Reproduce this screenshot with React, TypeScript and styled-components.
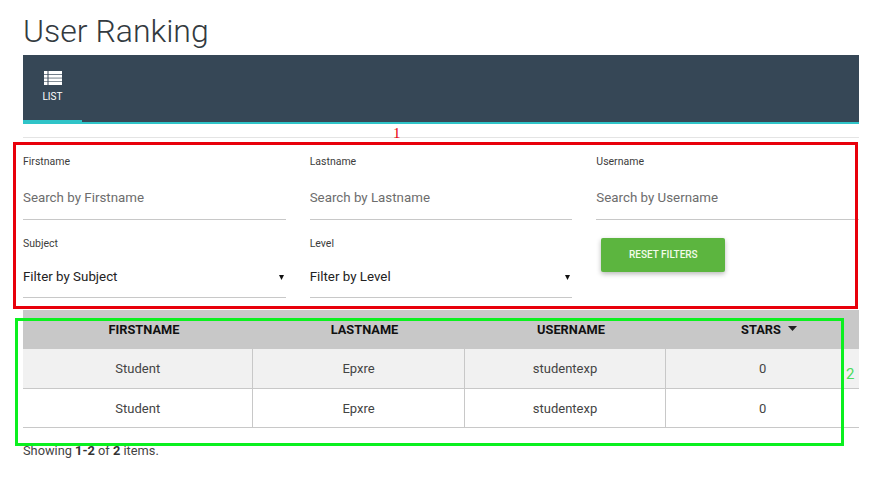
import React from "react";
import styled, { createGlobalStyle } from "styled-components";

const Global = createGlobalStyle`
  html, body { margin: 0; padding: 0; background: #fff; }
  body { font-family: Roboto, "Liberation Sans", sans-serif; color: #333; }
  * { box-sizing: border-box; }
`;

const Page = styled.div`
  position: relative;
  width: 878px;
  height: 478px;
  padding: 0 19px 0 23px;
  overflow: hidden;
`;

const Title = styled.h1`
  margin: 0;
  height: 55px;
  padding-top: 11px;
  font-size: 32px;
  line-height: 40px;
  font-weight: 300;
  color: #333a40;
`;

const NavBar = styled.nav`
  display: flex;
  height: 69px;
  background: #364756;
  border-bottom: 2px solid #2fc4c8;
`;

const NavTab = styled.a`
  display: flex;
  flex-direction: column;
  align-items: center;
  width: 59px;
  height: 67px;
  padding-top: 16px;
  gap: 6px;
  border-bottom: 2px solid #2fc4c8;
  color: #fff;
  font-size: 10px;
  line-height: 12px;
`;

const Divider = styled.hr`
  margin: 13px 0 0;
  border: 0;
  border-top: 1px solid #e4e4e4;
`;

const FilterGrid = styled.form`
  display: grid;
  grid-template-columns: repeat(3, 1fr);
  column-gap: 24px;
  height: 172px;
  padding-top: 17px;
`;

const Field = styled.label`
  position: relative;
  display: flex;
  flex-direction: column;
  height: 82px;
`;

const FieldLabel = styled.span`
  font-size: 10.5px;
  line-height: 13px;
  color: #3c3c3c;
`;

const TextInput = styled.input`
  margin-top: 11px;
  height: 41px;
  padding: 0 0 4px;
  border: 0;
  border-bottom: 1px solid #c8c8c8;
  background: transparent;
  outline: none;
  font: 400 13.33px Roboto, sans-serif;
  &::placeholder { color: #6d6d6d; opacity: 1; }
`;

const SelectInput = styled.select`
  margin-top: 7px;
  height: 41px;
  padding: 0 0 2px;
  border: 0;
  border-radius: 0;
  border-bottom: 1px solid #c8c8c8;
  background: transparent;
  appearance: none;
  outline: none;
  color: #222;
  font: 400 13.33px Roboto, sans-serif;
`;

const SelectCaret = styled.svg`
  position: absolute;
  right: 2px;
  top: 38px;
  width: 5px;
  height: 5px;
`;

const ButtonCell = styled.div`
  padding: 1px 0 0 5px;
`;

const ResetButton = styled.button`
  width: 124px;
  height: 34px;
  padding: 0 0 2px;
  border: 0;
  border-radius: 2px;
  background: #5cb53f;
  color: #f2fbe9;
  font: 500 10px Roboto, sans-serif;
  text-transform: uppercase;
  box-shadow: 0 2px 5px rgba(0, 0, 0, 0.28);
`;

const Table = styled.table`
  width: 836px;
  border-collapse: collapse;
  table-layout: fixed;
`;

const HeadCell = styled.th<{ $shift?: boolean }>`
  height: 39px;
  padding: 0 ${(p) => (p.$shift ? "0" : "2px")} 1px ${(p) => (p.$shift ? "13px" : "0")};
  background: #c8c8c8;
  color: #111;
  font-size: 12.8px;
  font-weight: 700;
  text-align: center;
`;

const SortLabel = styled.span`
  position: relative;
`;

const SortCaret = styled.svg`
  position: absolute;
  left: 47px;
  top: 4px;
  width: 9px;
  height: 5px;
`;

const Row = styled.tr<{ $odd?: boolean }>`
  background: ${(p) => (p.$odd ? "#f1f1f1" : "#fff")};
`;

const Cell = styled.td<{ $lower?: boolean }>`
  height: 39px;
  padding: ${(p) => (p.$lower ? "1px" : "0")} 0 0 1px;
  border-bottom: 1px solid #c8c8c8;
  border-right: 1px solid #c8c8c8;
  font-size: 13px;
  color: #444;
  text-align: center;
  &:last-child { border-right: 0; }
`;

const Summary = styled.p`
  margin: 14px 0 0;
  font-size: 12.8px;
  line-height: 17px;
  color: #444;
  b { font-weight: 700; color: #333; }
`;

const Annotation = styled.div<{ $color: string; $x: number; $y: number; $w: number; $h: number }>`
  position: absolute;
  left: ${(p) => p.$x}px;
  top: ${(p) => p.$y}px;
  width: ${(p) => p.$w}px;
  height: ${(p) => p.$h}px;
  border: 3px solid ${(p) => p.$color};
  pointer-events: none;
`;

const AnnotationNumber = styled.span<{ $color: string; $x: number; $y: number; $serif?: boolean }>`
  position: absolute;
  left: ${(p) => p.$x}px;
  top: ${(p) => p.$y}px;
  color: ${(p) => p.$color};
  font: 400 15px/15px ${(p) => (p.$serif ? '"Liberation Serif", serif' : "Roboto, sans-serif")};
`;

const rows = [1, 2];

export default function App() {
  return (
    <Page>
      <Global />
      <Title>User Ranking</Title>
      <NavBar>
        <NavTab>
          <svg width="18" height="14" viewBox="0 0 18 14" fill="#fff">
            <rect x="0" y="0" width="3.5" height="3" />
            <rect x="4.5" y="0" width="13.5" height="3" />
            <rect x="0" y="3.7" width="3.5" height="3" />
            <rect x="4.5" y="3.7" width="13.5" height="3" />
            <rect x="0" y="7.4" width="3.5" height="3" />
            <rect x="4.5" y="7.4" width="13.5" height="3" />
            <rect x="0" y="11" width="3.5" height="3" />
            <rect x="4.5" y="11" width="13.5" height="3" />
          </svg>
          LIST
        </NavTab>
      </NavBar>
      <Divider />
      <FilterGrid>
        <Field>
          <FieldLabel>Firstname</FieldLabel>
          <TextInput placeholder="Search by Firstname" />
        </Field>
        <Field>
          <FieldLabel>Lastname</FieldLabel>
          <TextInput placeholder="Search by Lastname" />
        </Field>
        <Field>
          <FieldLabel>Username</FieldLabel>
          <TextInput placeholder="Search by Username" />
        </Field>
        <Field>
          <FieldLabel>Subject</FieldLabel>
          <SelectInput defaultValue="">
            <option value="">Filter by Subject</option>
          </SelectInput>
          <SelectCaret viewBox="0 0 6 6"><path d="M0 0h6L3 6z" fill="#111" /></SelectCaret>
        </Field>
        <Field>
          <FieldLabel>Level</FieldLabel>
          <SelectInput defaultValue="">
            <option value="">Filter by Level</option>
          </SelectInput>
          <SelectCaret viewBox="0 0 6 6"><path d="M0 0h6L3 6z" fill="#111" /></SelectCaret>
        </Field>
        <ButtonCell>
          <ResetButton type="button">Reset Filters</ResetButton>
        </ButtonCell>
      </FilterGrid>
      <Table>
        <colgroup>
          <col width="229" />
          <col width="212" />
          <col width="201" />
          <col width="194" />
        </colgroup>
        <thead>
          <tr>
            <HeadCell $shift>FIRSTNAME</HeadCell>
            <HeadCell $shift>LASTNAME</HeadCell>
            <HeadCell $shift>USERNAME</HeadCell>
            <HeadCell>
              <SortLabel>
                STARS
                <SortCaret viewBox="0 0 9 5"><path d="M0 0h9L4.5 5z" fill="#222" /></SortCaret>
              </SortLabel>
            </HeadCell>
          </tr>
        </thead>
        <tbody>
          {rows.map((r) => (
            <Row key={r} $odd={r === 1}>
              <Cell $lower={r === 2}>Student</Cell>
              <Cell $lower={r === 2}>Epxre</Cell>
              <Cell $lower={r === 2}>studentexp</Cell>
              <Cell $lower={r === 2}>0</Cell>
            </Row>
          ))}
        </tbody>
      </Table>
      <Summary>
        Showing <b>1-2</b> of <b>2</b> items.
      </Summary>
      <Annotation $color="#e8000b" $x={13} $y={142} $w={845} $h={167} />
      <Annotation $color="#0bf01f" $x={15} $y={318} $w={829} $h={128} />
      <AnnotationNumber $color="#e8000b" $x={393} $y={126} $serif>1</AnnotationNumber>
      <AnnotationNumber $color="#4cdc5c" $x={846} $y={367}>2</AnnotationNumber>
    </Page>
  );
}
